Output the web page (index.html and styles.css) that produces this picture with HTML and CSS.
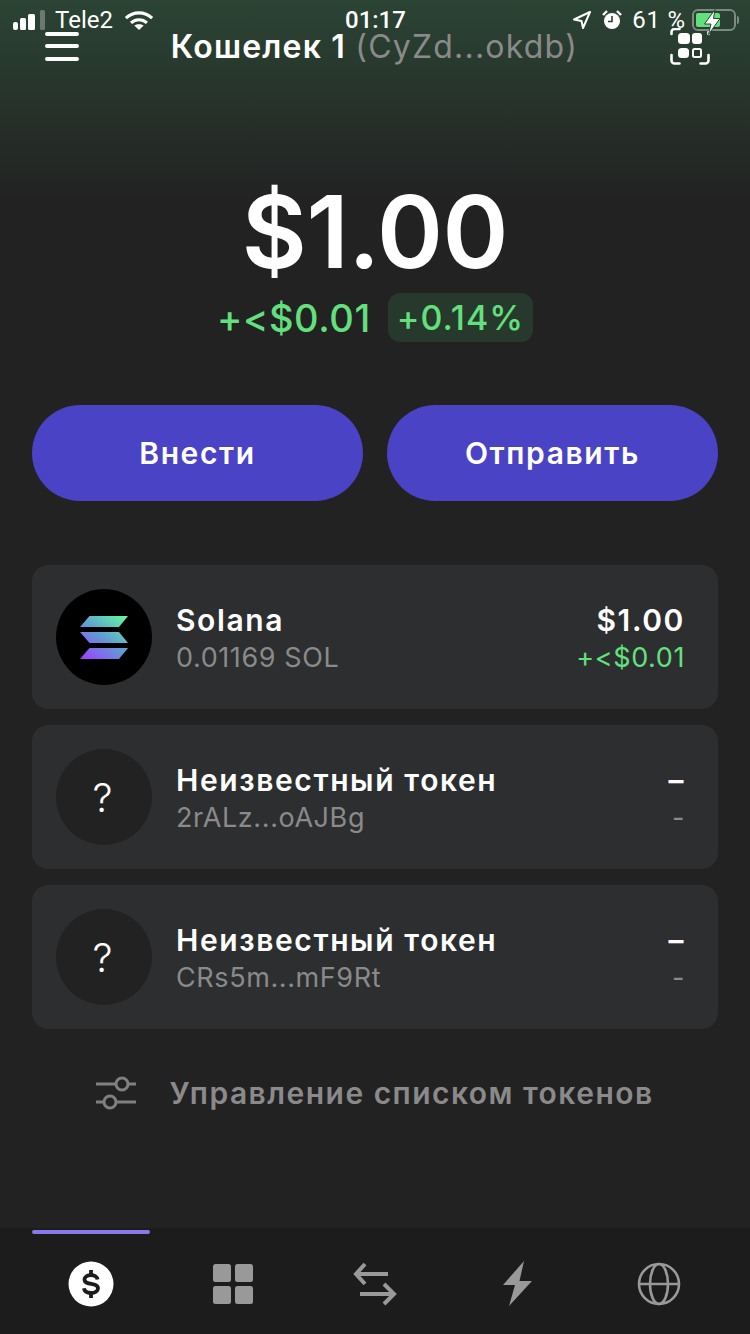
FILE: index.html
```html
<!DOCTYPE html>
<html lang="ru">
<head>
  <meta charset="UTF-8">
  <meta name="viewport" content="width=device-width, initial-scale=1.0">
  <title>Кошелек</title>
  <link rel="stylesheet" href="styles.css">
</head>
<body>
  <div class="app">
    <!-- iOS status bar lies over the header -->
    <div class="status">
      <div class="status-left">
        <svg class="signal" width="33" height="20" viewBox="0 0 33 20">
          <rect x="0" y="12" width="5" height="8" rx="2" fill="#fff"/>
          <rect x="7" y="8" width="6" height="12" rx="1.500" fill="#fff"/>
          <rect x="15" y="4" width="7" height="16" rx="1.500" fill="#fff"/>
          <rect x="27" y="0" width="5" height="20" rx="1.500" fill="#fff" opacity=".3"/>
        </svg>
        <span class="carrier">Tele2</span>
        <svg class="wifi" width="30" height="21" viewBox="0 0 32 22" fill="none" stroke="#fff" stroke-width="3.400">
          <path d="M2 8.500C10 1 22 1 30 8.500"/>
          <path d="M7.500 13.500c5-4.400 12-4.400 17 0"/>
          <path d="M16 21l-5-4.600c3-2 7-2 10 0z" fill="#fff" stroke="none"/>
        </svg>
      </div>
      <span class="clock">01:17</span>
      <div class="status-right">
        <svg width="20" height="20" viewBox="0 0 20 20" fill="none" stroke="#fff" stroke-width="2">
          <path d="M18 2L2 9.500l7.500 1.500L11 18z" stroke-linejoin="round"/>
        </svg>
        <svg class="alarm" width="20" height="20" viewBox="0 0 20 20">
          <circle cx="10" cy="11" r="8" fill="#fff"/>
          <path d="M1 5l4-4M19 5l-4-4" stroke="#fff" stroke-width="2.400"/>
          <path d="M10 6v5.500H6" fill="none" stroke="#2a4032" stroke-width="1.600"/>
        </svg>
        <span class="battery-text">61 %</span>
        <div class="battery">
          <div class="battery-fill"></div>
          <svg class="bolt" width="18" height="26" viewBox="0 0 18 26">
            <path d="M12 .5L1.500 15H8L5.500 25.500 17 9.500h-6.500z" fill="#fff" stroke="#2a4032" stroke-width="1"/>
          </svg>
        </div>
      </div>
    </div>

    <header class="header">
      <button class="icon-btn" aria-label="Меню">
        <svg width="34" height="30" viewBox="0 0 34 30" fill="#fff">
          <rect x="0" y="0" width="34" height="4" rx="2"/>
          <rect x="0" y="12" width="34" height="4" rx="2"/>
          <rect x="0" y="25" width="34" height="4" rx="2"/>
        </svg>
      </button>
      <div class="wallet-name">Кошелек 1 <span class="wallet-addr">(CyZd...okdb)</span></div>
      <button class="icon-btn" aria-label="QR">
        <svg width="40" height="37" viewBox="0 0 40 37" fill="none">
          <path d="M1.500 27v5.500a3 3 0 0 0 3 3h5M38.500 27v5.500a3 3 0 0 1-3 3h-5" stroke="#fff" stroke-width="2.600" stroke-linecap="round"/>
          <path d="M1.500 6v-2a3 3 0 0 1 3-3h5M38.500 6v-2" stroke="#fff" stroke-width="2.600" stroke-linecap="round"/>
          <rect x="8" y="5" width="12" height="11" rx="3.500" fill="#fff"/>
          <rect x="22" y="5" width="10" height="11" rx="3" fill="#fff"/>
          <rect x="8" y="20" width="11" height="10" rx="3.500" fill="#fff"/>
          <rect x="23" y="21" width="8" height="8" rx="1.500" stroke="#fff" stroke-width="2"/>
        </svg>
      </button>
    </header>

    <section class="balance">
      <div class="balance-value">$1.00</div>
      <div class="balance-change">
        <span class="change-abs">+&lt;$0.01</span>
        <span class="change-pct">+0.14%</span>
      </div>
    </section>

    <div class="actions">
      <button class="action">Внести</button>
      <button class="action">Отправить</button>
    </div>

    <div class="tokens">
      <div class="token">
        <div class="token-icon sol">
          <svg width="49" height="43" viewBox="0 0 49 43">
            <defs>
              <linearGradient id="solgrad" gradientUnits="userSpaceOnUse" x1="8" y1="45" x2="42" y2="-2">
                <stop offset="0" stop-color="#9945ff"/>
                <stop offset=".5" stop-color="#5f9fd2"/>
                <stop offset="1" stop-color="#66f5a0"/>
              </linearGradient>
            </defs>
            <path d="M9.500 0H48L39 11H0z" fill="url(#solgrad)"/>
            <path d="M0 16H39L48 27H9.500z" fill="url(#solgrad)"/>
            <path d="M9.500 32H48L39 43H0z" fill="url(#solgrad)"/>
          </svg>
        </div>
        <div class="token-info">
          <div class="token-name">Solana</div>
          <div class="token-sub">0.01169 SOL</div>
        </div>
        <div class="token-values">
          <div class="token-name">$1.00</div>
          <div class="token-sub green">+&lt;$0.01</div>
        </div>
      </div>

      <div class="token">
        <div class="token-icon">?</div>
        <div class="token-info">
          <div class="token-name">Неизвестный токен</div>
          <div class="token-sub">2rALz...oAJBg</div>
        </div>
        <div class="token-values">
          <div class="token-name">–</div>
          <div class="token-sub">-</div>
        </div>
      </div>

      <div class="token">
        <div class="token-icon">?</div>
        <div class="token-info">
          <div class="token-name">Неизвестный токен</div>
          <div class="token-sub">CRs5m...mF9Rt</div>
        </div>
        <div class="token-values">
          <div class="token-name">–</div>
          <div class="token-sub">-</div>
        </div>
      </div>
    </div>

    <button class="manage">
      <svg width="40" height="34" viewBox="0 0 40 34" fill="none" stroke="#808080" stroke-width="3">
        <path d="M0 8h20M32 8h8M0 26h8M20 26h20"/>
        <circle cx="26" cy="8" r="6"/>
        <circle cx="14" cy="26" r="6"/>
      </svg>
      <span>Управление списком токенов</span>
    </button>

    <nav class="tabs">
      <div class="tab active">
        <svg width="46" height="46" viewBox="0 0 46 46">
          <circle cx="23" cy="23" r="22.500" fill="#fff"/>
          <path d="M29.500 18.500c-.3-2.700-3-4.500-6.500-4.500s-6.500 1.800-6.500 4.500c0 6.500 13.500 2.500 13.500 8.800 0 2.900-3 4.700-7 4.700s-6.700-1.800-7-4.700M23 9v5M23 32v5" fill="none" stroke="#1c1c1c" stroke-width="3.800"/>
        </svg>
      </div>
      <div class="tab">
        <svg width="40" height="40" viewBox="0 0 40 40" fill="#999">
          <rect x="0" y="0" width="18" height="18" rx="2.500"/>
          <rect x="22" y="0" width="18" height="18" rx="2.500"/>
          <rect x="0" y="22" width="18" height="18" rx="2.500"/>
          <rect x="22" y="22" width="18" height="18" rx="2.500"/>
        </svg>
      </div>
      <div class="tab">
        <svg width="44" height="44" viewBox="0 0 44 44" fill="none" stroke="#999" stroke-width="4">
          <path d="M12 2L3 12l9 10M3 12h32"/>
          <path d="M31 22l10 10-10 10M41 32H7"/>
        </svg>
      </div>
      <div class="tab">
        <svg width="31" height="47" viewBox="0 0 31 47" fill="#999">
          <path d="M22 1L1 25h12L7 46l23-25H17.500z"/>
        </svg>
      </div>
      <div class="tab">
        <svg width="44" height="44" viewBox="0 0 44 44" fill="none" stroke="#999" stroke-width="2.600">
          <circle cx="22" cy="22" r="20"/>
          <ellipse cx="22" cy="22" rx="9" ry="20"/>
          <path d="M2 22h40"/>
        </svg>
      </div>
    </nav>
  </div>
</body>
</html>
```

FILE: styles.css
```css
:root {
  --bg: #222222;
  --card: #2d2e30;
  --accent: #4a43c6;
  --green: #63e07d;
  --muted: #8a8a8a;
}

* {
  margin: 0;
  padding: 0;
  box-sizing: border-box;
}

body {
  font-family: Inter, "Liberation Sans", sans-serif;
  background: var(--bg);
  color: #fff;
}

button {
  font-family: inherit;
  background: none;
  border: none;
  color: inherit;
}

.app {
  position: relative;
  width: 750px;
  height: 1334px;
  overflow: hidden;
  display: flex;
  flex-direction: column;
  background: linear-gradient(180deg, #2b4434 0%, #222 200px);
}

/* Status bar */
.status {
  position: absolute;
  top: 10px;
  left: 0;
  width: 100%;
  height: 20px;
  font-size: 24px;
  line-height: 20px;
  font-family: Roboto, Inter, sans-serif;
}

.status-left {
  position: absolute;
  left: 13px;
  top: 0;
  display: flex;
  align-items: center;
  height: 20px;
}

.carrier {
  margin-left: 9px;
  margin-right: 11px;
}

.clock {
  position: absolute;
  left: 345px;
  top: 0;
  font-weight: 500;
}

.status-right {
  position: absolute;
  right: 14px;
  top: 0;
  height: 20px;
  display: flex;
  align-items: center;
  gap: 10px;
}

.battery-text {
  margin-right: -4px;
  letter-spacing: .8px;
}

.battery {
  position: relative;
  width: 44px;
  height: 22px;
  border: 2px solid #7d8a80;
  border-radius: 6px;
  padding: 2px;
}

/* battery nub */
.battery::after {
  content: '';
  position: absolute;
  right: -5px;
  top: 5px;
  width: 2px;
  height: 8px;
  background: #7d8a80;
  border-radius: 0 2px 2px 0;
}

.battery-fill {
  width: 24px;
  height: 14px;
  background: var(--green);
  border-radius: 2px;
}

.bolt {
  position: absolute;
  left: 9px;
  top: -2px;
}

/* Header */
.header {
  display: flex;
  align-items: center;
  justify-content: space-between;
  padding: 27px 40px 0 45px;
  height: 66px;
}

.icon-btn {
  display: flex;
}

.wallet-name {
  font-size: 32px;
  line-height: 32px;
  font-weight: 600;
  letter-spacing: 1.2px;
}

.wallet-addr {
  font-weight: 400;
  color: var(--muted);
}

/* Balance */
.balance {
  display: flex;
  flex-direction: column;
  align-items: center;
  margin-top: 104px;
}

.balance-value {
  font-size: 100px;
  line-height: 124px;
  font-weight: 600;
  letter-spacing: -.4px;
}

.balance-change {
  display: flex;
  align-items: center;
  gap: 17px;
  margin-top: -1px;
  color: var(--green);
  font-size: 38px;
  font-weight: 500;
  letter-spacing: .6px;
}

.change-pct {
  font-size: 34px;
  letter-spacing: 1px;
  background: #27382c;
  border-radius: 12px;
  padding: 5px 9px;
  line-height: 39px;
}

/* Actions */
.actions {
  display: flex;
  gap: 24px;
  padding: 0 32px;
  margin-top: 63px;
}

.action {
  flex: 1;
  height: 96px;
  border-radius: 48px;
  background: var(--accent);
  font-size: 30px;
  font-weight: 600;
  letter-spacing: 1.6px;
}

/* Token list */
.tokens {
  display: flex;
  flex-direction: column;
  gap: 16px;
  padding: 0 32px;
  margin-top: 64px;
}

.token {
  display: flex;
  align-items: center;
  height: 144px;
  padding: 0 33px 0 24px;
  background: var(--card);
  border-radius: 16px;
}

.token-icon {
  width: 96px;
  height: 96px;
  flex: none;
  border-radius: 50%;
  background: #222;
  display: flex;
  align-items: center;
  justify-content: center;
  font-size: 40px;
  font-weight: 300;
  padding-right: 3px;
}

.token-icon.sol {
  background: #000;
  padding-right: 0;
}

.token-info {
  flex: 1;
  margin-left: 24px;
  padding-top: 3px;
}

.token-values {
  text-align: right;
  padding-top: 3px;
}

.token-name {
  font-size: 30px;
  line-height: 38px;
  font-weight: 600;
  letter-spacing: 1.600px;
}

.token-sub {
  font-size: 27px;
  line-height: 36px;
  margin-top: 1px;
  color: var(--muted);
  letter-spacing: .6px;
}

.green {
  color: var(--green);
}

/* Manage tokens */
.manage {
  display: flex;
  align-items: center;
  justify-content: center;
  gap: 33px;
  margin-top: 46px;
  color: var(--muted);
  font-size: 30px;
  font-weight: 600;
  letter-spacing: 1.460px;
}

/* Bottom tabs */
.tabs {
  margin-top: auto;
  height: 106px;
  display: flex;
  padding: 0 20px;
  background: #1c1c1c;
}

.tab {
  position: relative;
  flex: 1;
  display: flex;
  align-items: center;
  justify-content: center;
  padding-top: 5px;
}

/* active tab marker */
.tab.active::before {
  content: '';
  position: absolute;
  top: 2px;
  left: 12px;
  width: 118px;
  height: 4px;
  background: #8679e8;
  border-radius: 2px;
}
```
